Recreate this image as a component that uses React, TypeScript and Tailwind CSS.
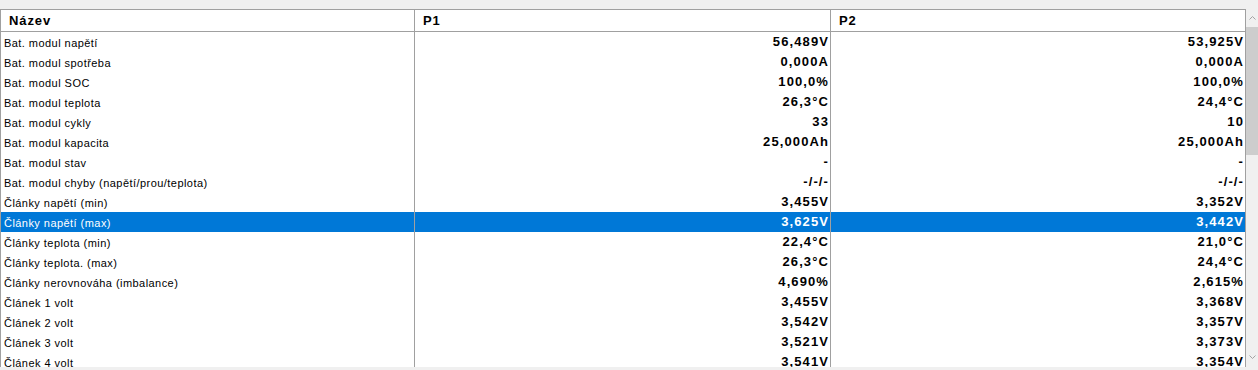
const rows: [string, string, string][] = [
  ["Bat. modul napětí", "56,489V", "53,925V"],
  ["Bat. modul spotřeba", "0,000A", "0,000A"],
  ["Bat. modul SOC", "100,0%", "100,0%"],
  ["Bat. modul teplota", "26,3°C", "24,4°C"],
  ["Bat. modul cykly", "33", "10"],
  ["Bat. modul kapacita", "25,000Ah", "25,000Ah"],
  ["Bat. modul stav", "-", "-"],
  ["Bat. modul chyby (napětí/prou/teplota)", "-/-/-", "-/-/-"],
  ["Články napětí (min)", "3,455V", "3,352V"],
  ["Články napětí (max)", "3,625V", "3,442V"],
  ["Články teplota (min)", "22,4°C", "21,0°C"],
  ["Články teplota. (max)", "26,3°C", "24,4°C"],
  ["Články nerovnováha (imbalance)", "4,690%", "2,615%"],
  ["Článek 1 volt", "3,455V", "3,368V"],
  ["Článek 2 volt", "3,542V", "3,357V"],
  ["Článek 3 volt", "3,521V", "3,373V"],
  ["Článek 4 volt", "3,541V", "3,354V"]
];

const selectedIndex = 9;

const Chevron = ({ up }: { up?: boolean }) => (
  <svg width="7" height="4" viewBox="0 0 7 4" className="block">
    <path
      d={up ? "M0.5 3.5 L3.5 0.5 L6.5 3.5" : "M0.5 0.5 L3.5 3.5 L6.5 0.5"}
      fill="none"
      stroke="#a3a3a3"
      strokeWidth="1"
    />
  </svg>
);

export default function App() {
  return (
    <div className="flex h-[370px] w-[1258px] overflow-hidden bg-[#f0f0f0] pt-[9px] pb-[3px] font-['Liberation_Sans',Arial,sans-serif] text-black">
      <div className="h-[358px] w-[1246px] overflow-hidden border-t border-l border-[#a0a0a0] bg-white">
        <div className="grid h-[22px] grid-cols-[414px_416px_415px] text-[13px] font-bold tracking-[0.9px]">
          <div className="flex items-center border-r border-b border-[#a0a0a0] pt-[1px] pl-2">Název</div>
          <div className="flex items-center border-r border-b border-[#a0a0a0] pt-[1px] pl-2">P1</div>
          <div className="flex items-center border-r border-b border-[#a0a0a0] pt-[1px] pl-2">P2</div>
        </div>
        {rows.map(([name, p1, p2], i) => {
          const selected = i === selectedIndex;
          const cell = selected
            ? "bg-[#0078d7] text-white"
            : "bg-white text-black";
          return (
            <div key={name} className="grid h-[20px] grid-cols-[414px_416px_415px]">
              <div
                className={`flex items-center border-r border-b border-[#a0a0a0] pt-[2px] pl-[3px] text-[11px] tracking-[0.45px] ${cell}`}
              >
                {name}
              </div>
              <div
                className={`flex items-center justify-end border-r border-b border-[#a0a0a0] pr-[1px] text-[13px] font-bold tracking-[1.1px] ${cell}`}
              >
                {p1}
              </div>
              <div
                className={`flex items-center justify-end border-r border-b border-[#a0a0a0] pr-[1px] text-[13px] font-bold tracking-[1.1px] ${cell}`}
              >
                {p2}
              </div>
            </div>
          );
        })}
      </div>
      <div className="flex h-[358px] w-[12px] flex-col bg-[#f0f0f0]">
        <div className="flex h-[18px] items-center justify-center pl-[1px]">
          <Chevron up />
        </div>
        <div className="h-[128px] w-full bg-[#cdcdcd]" />
        <div className="flex-1" />
        <div className="flex h-[14px] items-start justify-center pt-[2px] pl-[1px]">
          <Chevron />
        </div>
      </div>
    </div>
  );
}
